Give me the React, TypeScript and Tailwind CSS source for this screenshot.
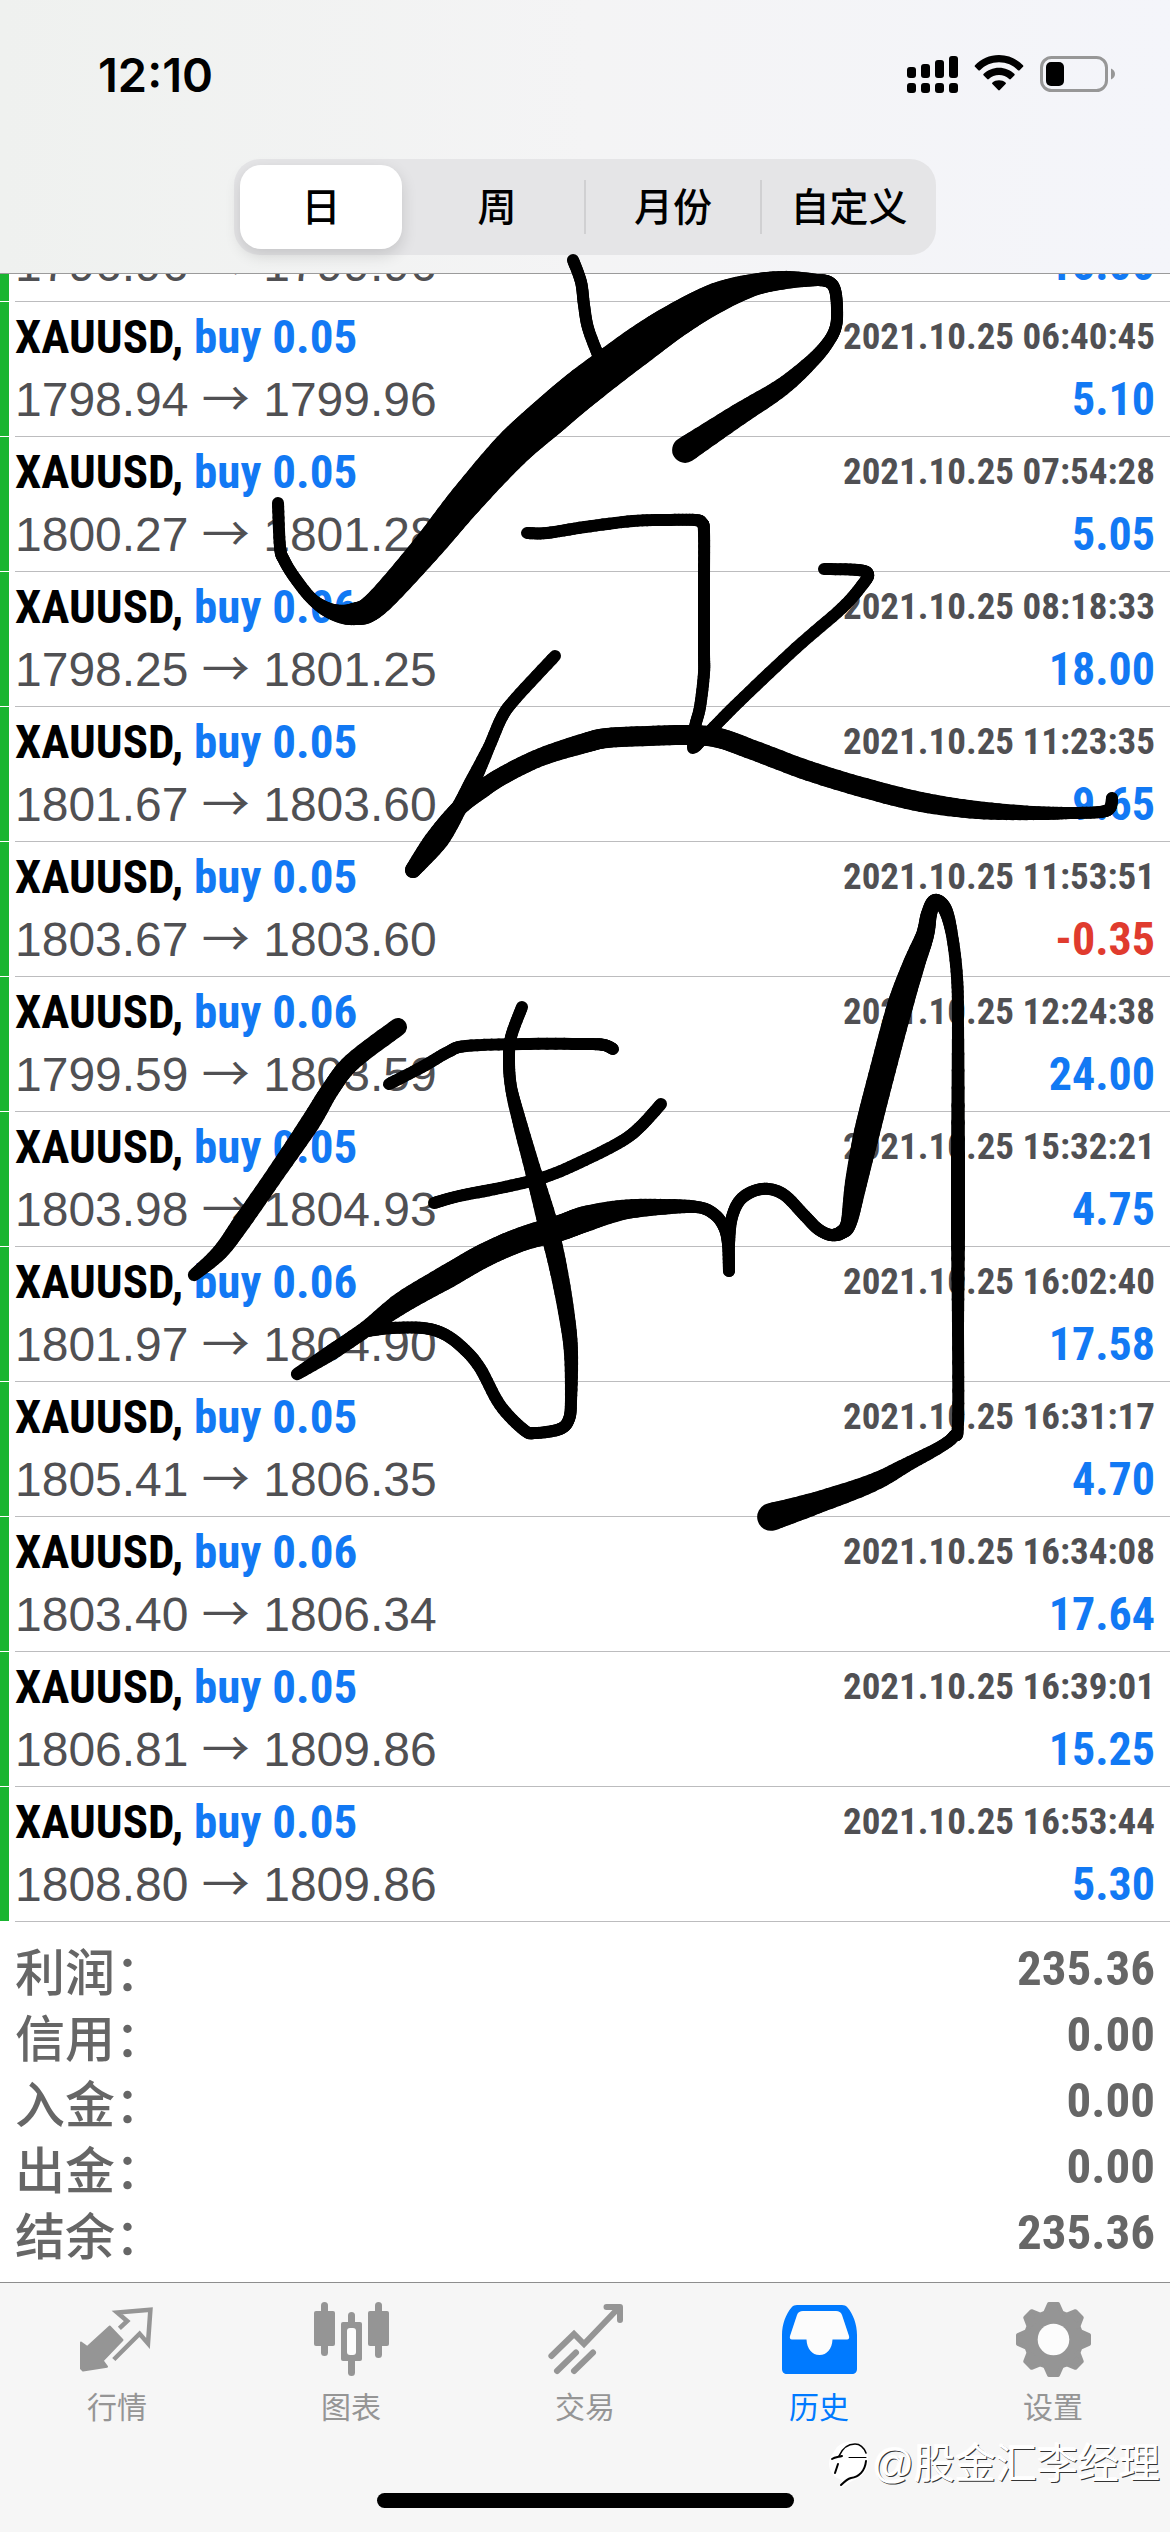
import { Fragment, useState } from "react";
import type { ReactNode } from "react";

type Deal = { lot: string; open: string; close: string; time: string; profit: string };

const deals: Deal[] = [
  { lot: "0.05", open: "1798.94", close: "1799.96", time: "2021.10.25 06:40:45", profit: "5.10" },
  { lot: "0.05", open: "1800.27", close: "1801.28", time: "2021.10.25 07:54:28", profit: "5.05" },
  { lot: "0.06", open: "1798.25", close: "1801.25", time: "2021.10.25 08:18:33", profit: "18.00" },
  { lot: "0.05", open: "1801.67", close: "1803.60", time: "2021.10.25 11:23:35", profit: "9.65" },
  { lot: "0.05", open: "1803.67", close: "1803.60", time: "2021.10.25 11:53:51", profit: "-0.35" },
  { lot: "0.06", open: "1799.59", close: "1803.59", time: "2021.10.25 12:24:38", profit: "24.00" },
  { lot: "0.05", open: "1803.98", close: "1804.93", time: "2021.10.25 15:32:21", profit: "4.75" },
  { lot: "0.06", open: "1801.97", close: "1804.90", time: "2021.10.25 16:02:40", profit: "17.58" },
  { lot: "0.05", open: "1805.41", close: "1806.35", time: "2021.10.25 16:31:17", profit: "4.70" },
  { lot: "0.06", open: "1803.40", close: "1806.34", time: "2021.10.25 16:34:08", profit: "17.64" },
  { lot: "0.05", open: "1806.81", close: "1809.86", time: "2021.10.25 16:39:01", profit: "15.25" },
  { lot: "0.05", open: "1808.80", close: "1809.86", time: "2021.10.25 16:53:44", profit: "5.30" },
];

const totals = [
  { label: "利润：", value: "235.36" },
  { label: "信用：", value: "0.00" },
  { label: "入金：", value: "0.00" },
  { label: "出金：", value: "0.00" },
  { label: "结余：", value: "235.36" },
];

const periods = ["日", "周", "月份", "自定义"];

const condensed = "font-['Liberation_Sans_Narrow','Roboto_Condensed','Noto_Sans_CJK_SC',sans-serif] font-bold";

export default function App() {
  return (
    <div className="relative flex min-h-screen flex-col overflow-hidden bg-white font-['Liberation_Sans','Noto_Sans_CJK_SC',sans-serif]">
      <Header />
      <main className="flex-1">
        <ul>
          {/* the deal above is almost scrolled out, only the foot of its prices shows */}
          <li className="flex h-[28px] overflow-hidden">
            <span className="mb-px w-[9px] bg-[#19b530]" />
            <div className="ml-[6px] flex flex-1 items-end justify-between border-b border-[#bcbcbe] pr-[15px] pb-[5px] whitespace-nowrap">
              <Prices open="1796.96" close="1799.96" />
              <Profit value="15.00" />
            </div>
          </li>
          {deals.map((deal) => (
            <DealRow key={deal.time} deal={deal} />
          ))}
        </ul>
        <Totals />
      </main>
      <TabBar />
      <Ink />
      <Watermark />
    </div>
  );
}

function Header() {
  const [period, setPeriod] = useState("日");

  return (
    <header className="z-10 border-b border-[#9b9b9b] bg-linear-to-r from-[#eff1ef] via-[#f4f4f5] to-[#f4f5fa] pb-[18px]">
      <div className="mb-[11px] flex h-[148px] items-center justify-between pr-[54px] pl-[98px]">
        <span className="font-['Inter',sans-serif] text-[47px] leading-none font-semibold text-black">12:10</span>
        <StatusIcons />
      </div>
      <div className="mx-auto flex w-3/5 items-center rounded-[26px] bg-[#e5e5e7] p-[6px]">
        {periods.map((name, i) => (
          <Fragment key={name}>
            {i > 0 && <span className={`mx-[6px] h-[54px] w-[2px] ${i > 1 ? "bg-[#d0d0d2]" : ""}`} />}
            <button
              type="button"
              onClick={() => setPeriod(name)}
              className={`h-[84px] flex-1 basis-0 rounded-[21px] text-[39px] leading-none font-medium whitespace-nowrap text-black ${
                period === name ? "bg-white shadow-[0_6px_16px_rgba(0,0,0,0.14)]" : ""
              }`}
            >
              {name}
            </button>
          </Fragment>
        ))}
      </div>
    </header>
  );
}

function StatusIcons() {
  return (
    <svg className="h-[38px] w-[209px]" viewBox="0 0 209 38" aria-hidden="true">
      <rect x="0" y="12" width="9" height="11" rx="3" />
      <rect x="14" y="9" width="9" height="14" rx="3" />
      <rect x="28" y="5" width="9" height="18" rx="3" />
      <rect x="42" y="1" width="9" height="22" rx="3" />
      <rect x="0" y="28" width="9" height="10" rx="3" />
      <rect x="14" y="28" width="9" height="10" rx="3" />
      <rect x="28" y="28" width="9" height="10" rx="3" />
      <rect x="42" y="28" width="9" height="10" rx="3" />
      <path d="M92 0C101.500 0 110 4 116 10.200C116.500 10.700 116.500 11.300 116 11.800L112.600 15.200C112.100 15.700 111.500 15.700 111 15.200C106 10.200 99.500 7.300 92 7.300S78 10.200 73 15.200C72.500 15.700 71.900 15.700 71.400 15.200L68 11.800C67.500 11.300 67.500 10.700 68 10.200C74 4 82.500 0 92 0Z" />
      <path d="M92 12.700C98 12.700 103.300 15 107.300 18.800C107.900 19.400 107.900 20 107.300 20.600L103.800 24C103.300 24.500 102.700 24.500 102.200 24C99.400 21.500 96 20 92 20S84.600 21.500 81.800 24C81.300 24.500 80.700 24.500 80.200 24L76.700 20.600C76.100 20 76.100 19.400 76.700 18.800C80.700 15 86 12.700 92 12.700Z" />
      <path d="M92 25.200C94.500 25.200 96.800 26 98.500 27.400C99.100 28 99.100 28.600 98.600 29.100L92.800 35C92.300 35.500 91.700 35.500 91.200 35L85.400 29.100C84.900 28.600 84.900 28 85.500 27.400C87.200 26 89.500 25.200 92 25.200Z" />
      <rect x="134.500" y="2.500" width="65" height="33" rx="10" fill="none" stroke="#979797" strokeWidth="3" />
      <rect x="139" y="7" width="18" height="24" rx="5" />
      <path d="M204 13.500C206.500 14.500 208 16.500 208 19S206.500 23.500 204 24.500Z" fill="#979797" />
    </svg>
  );
}

function DealRow({ deal }: { deal: Deal }) {
  return (
    <li className="flex">
      <span className="mb-px w-[9px] bg-[#19b530]" />
      <div className="ml-[6px] flex-1 border-b border-[#bcbcbe] pt-[3px] pr-[15px] pb-[5px] whitespace-nowrap">
        <div className={`flex h-[63px] items-center justify-between ${condensed}`}>
          <p className="text-[47px] leading-[63px] text-black">
            XAUUSD, <span className="text-[#1279f4]">buy {deal.lot}</span>
          </p>
          <p className="text-[37px] leading-[63px] text-[#505053]">{deal.time}</p>
        </div>
        <div className="flex h-[63px] items-center justify-between">
          <Prices open={deal.open} close={deal.close} />
          <Profit value={deal.profit} />
        </div>
      </div>
    </li>
  );
}

function Prices({ open, close }: { open: string; close: string }) {
  return (
    <p className="h-[63px] text-[48px] leading-[63px] text-[#505053]">
      {open} <span className="font-['Noto_Sans_CJK_SC',sans-serif] leading-none">→</span> {close}
    </p>
  );
}

function Profit({ value }: { value: string }) {
  return (
    <p className={`text-[46px] leading-[63px] ${condensed} ${value.startsWith("-") ? "text-[#e03b2e]" : "text-[#1279f4]"}`}>
      {value}
    </p>
  );
}

function Totals() {
  return (
    <dl className="px-[15px] pt-[14px] pb-4 text-[#666]">
      {totals.map(({ label, value }) => (
        <div key={label} className="flex h-[66px] items-center justify-between">
          <dt className="font-['Noto_Sans_CJK_SC',sans-serif] text-[50px] leading-[62px] font-medium">{label}</dt>
          <dd className={`text-[49px] leading-[66px] ${condensed}`}>{value}</dd>
        </div>
      ))}
    </dl>
  );
}

function TabBar() {
  return (
    <footer className="border-t border-[#8e8e8e] bg-[#f6f6f6] pb-6">
      <nav className="grid grid-cols-5 pt-[18px]">
        <Tab label="行情">
          <path
            d="M1 41.500L7.300 46L29.700 25.500L42.500 39L22.600 59.700L27 65.700L3 69.500L1 67.500Z"
            fill="currentColor"
            stroke="currentColor"
            strokeWidth="2"
            strokeLinejoin="round"
          />
          <path d="M39.400 27.300L47.200 20L37.200 11.500L70.400 8.700L68 42.500L59.600 32.700L33.800 58.500" fill="none" stroke="currentColor" strokeWidth="4.500" />
        </Tab>
        <Tab label="图表">
          <g fill="currentColor">
            <rect x="7" y="1" width="7" height="54" rx="3.500" />
            <rect x="0" y="10" width="21" height="35" rx="2" />
            <rect x="34" y="11" width="7" height="64" rx="3.500" />
            <rect x="27" y="21" width="21" height="39" rx="2" />
            <rect x="61" y="1" width="7" height="56" rx="3.500" />
            <rect x="54" y="10" width="21" height="35" rx="2" />
          </g>
          <rect x="33" y="27" width="9" height="27" rx="3" fill="#fcfcfc" />
        </Tab>
        <Tab label="交易">
          <g fill="none" stroke="currentColor" strokeWidth="6">
            <path d="M3.400 55L26 33L36 43L71 6.500" strokeLinecap="round" />
            <path d="M58.500 6H72V19" strokeLinecap="round" strokeLinejoin="round" />
            <path d="M9 70L28 51.500M26 70L45 51.500" strokeLinecap="round" />
          </g>
        </Tab>
        <Tab label="历史" active>
          <path
            d="M0 34C0 23 4 13 9.500 6.500C11 4.700 13 4 15 4H60C62 4 64 4.700 65.500 6.500C71 13 75 23 75 34V68C75 71 73 73 70 73H5C2 73 0 71 0 68Z"
            fill="currentColor"
          />
          <path
            d="M21 10H54C57 10 58.800 11 60 14L67 35C67.500 37 67 38.500 65 38.500H50.500C50 48 45 54 37.500 54S25 48 24.500 38.500H10C8 38.500 7.500 37 8 35L15 14C16.200 11 18 10 21 10Z"
            fill="#fcfcfc"
          />
        </Tab>
        <Tab label="设置">
          <g fill="currentColor" stroke="currentColor" strokeWidth="4" strokeLinejoin="round">
            <circle cx="37.500" cy="38.500" r="28" />
            {[0, 45, 90, 135, 180, 225, 270, 315].map((deg) => (
              <path key={deg} d="M29 12L33 3H42L46 12Z" transform={`rotate(${deg} 37.500 38.500)`} />
            ))}
          </g>
          <circle cx="37.500" cy="38.500" r="15.800" fill="#fcfcfc" />
        </Tab>
      </nav>
      <div className="mx-auto mt-[69px] h-[15px] w-[417px] rounded-full bg-black" />
    </footer>
  );
}

function Tab({ label, active = false, children }: { label: string; active?: boolean; children: ReactNode }) {
  return (
    <a href="#" className={`flex flex-col items-center ${active ? "text-[#007aff]" : "text-[#959595]"}`}>
      <svg className="h-[76px] w-[75px] overflow-visible" viewBox="0 0 75 76" aria-hidden="true">
        {children}
      </svg>
      <span className="mt-[9px] font-['Noto_Sans_CJK_SC',sans-serif] text-[30px] leading-[38px]">{label}</span>
    </a>
  );
}

// x, y, pen radius
type Dab = [number, number, number];

const strokes: Dab[][] = [
  [[278, 503, 6], [280, 547, 6], [284, 560, 6], [295, 578, 6], [313, 600, 6], [333, 612, 8], [354, 614, 11], [376, 604, 13], [425, 550, 15], [466, 500, 17], [511, 450, 19], [548, 417, 20], [585, 386, 20], [641, 344, 19], [678, 319, 17], [716, 298, 15], [753, 285, 11], [786, 280, 9], [816, 280, 6], [829, 282, 6], [835, 290, 6], [837, 308, 6], [836, 326, 6], [829, 341, 6], [813, 360, 7], [782, 387, 9], [738, 415, 11], [685, 450, 13]],
  [[573, 260, 6], [581, 282, 6], [584, 305, 6], [588, 328, 6], [598, 355, 6]],
  [[527, 533, 6], [547, 533, 6], [585, 527, 6], [633, 521, 6], [667, 520, 6], [695, 520, 6], [702, 523, 6], [704, 532, 6], [704, 580, 6], [704, 650, 6], [704, 673, 6], [700, 707, 6], [695, 727, 6], [693, 748, 6]],
  [[824, 569, 6], [858, 570, 6], [868, 574, 6], [863, 584, 6], [842, 608, 6], [796, 648, 6], [744, 697, 6], [714, 727, 6], [695, 747, 6]],
  [[555, 656, 6], [516, 698, 6], [502, 717, 6], [489, 747, 6], [472, 783, 8], [459, 808, 8], [440, 840, 9], [413, 870, 8]],
  [[413, 870, 8], [433, 840, 9], [457, 810, 8], [481, 790, 9], [504, 775, 9], [541, 757, 9], [585, 743, 10], [607, 738, 10], [648, 736, 10], [690, 735, 10], [719, 738, 10], [753, 750, 10], [809, 771, 10], [865, 788, 10], [921, 802, 10], [977, 810, 9], [1033, 813, 7], [1070, 813, 6], [1100, 812, 6], [1110, 808, 6], [1112, 798, 6]],
  [[398, 1027, 9], [352, 1062, 9], [330, 1090, 9], [310, 1123, 10], [276, 1173, 9], [242, 1222, 9], [220, 1252, 8], [194, 1275, 6]],
  [[389, 1084, 6], [422, 1067, 6], [448, 1052, 6], [466, 1046, 6], [522, 1044, 6], [585, 1044, 6], [604, 1045, 6], [613, 1049, 6]],
  [[522, 1007, 6], [511, 1037, 6], [509, 1060, 6], [511, 1087, 6], [519, 1120, 7], [532, 1167, 8], [546, 1217, 10], [558, 1267, 9], [567, 1317, 8], [571, 1353, 7], [571, 1400, 6], [569, 1419, 6], [560, 1429, 6], [536, 1433, 6], [524, 1430, 6], [500, 1405, 6], [480, 1368, 6], [463, 1348, 6], [444, 1334, 6], [423, 1328, 6], [392, 1328, 6], [367, 1331, 6]],
  [[434, 1203, 6], [459, 1196, 6], [500, 1188, 6], [545, 1177, 6], [585, 1160, 6], [622, 1141, 6], [641, 1126, 6], [661, 1104, 6]],
  [[297, 1374, 6], [332, 1352, 8], [366, 1329, 8], [403, 1302, 11], [448, 1276, 12], [485, 1255, 12], [522, 1239, 12], [560, 1228, 13], [585, 1219, 13], [622, 1210, 10], [660, 1207, 8], [697, 1207, 6], [714, 1214, 6], [724, 1227, 6], [728, 1244, 6], [729, 1271, 6]],
  [[729, 1271, 6], [729, 1244, 6], [732, 1217, 6], [742, 1198, 6], [762, 1189, 6], [783, 1194, 6], [805, 1216, 6], [818, 1229, 6], [831, 1235, 6], [842, 1232, 7], [849, 1222, 8], [856, 1183, 11], [867, 1132, 13], [883, 1069, 13], [900, 1006, 13], [914, 964, 11], [925, 935, 9], [929, 914, 8], [935, 901, 7], [945, 909, 7], [952, 935, 6], [957, 977, 6], [958, 1027, 6], [958, 1153, 7], [958, 1238, 7], [958, 1322, 6], [958, 1423, 6], [954, 1436, 6], [940, 1447, 6], [910, 1463, 7], [872, 1483, 9], [816, 1503, 11], [771, 1517, 14]],
];

function spline(a: number, b: number, c: number, d: number, t: number) {
  return 0.5 * (2 * b + (c - a) * t + (2 * a - 5 * b + 4 * c - d) * t * t + (3 * b - a - 3 * c + d) * t * t * t);
}

function smooth(points: Dab[], steps = 8): Dab[] {
  const out: Dab[] = [];
  for (let i = 0; i < points.length - 1; i++) {
    const p0 = points[Math.max(i - 1, 0)];
    const p1 = points[i];
    const p2 = points[i + 1];
    const p3 = points[Math.min(i + 2, points.length - 1)];
    for (let s = 0; s < steps; s++) {
      const t = s / steps;
      out.push([
        spline(p0[0], p1[0], p2[0], p3[0], t),
        spline(p0[1], p1[1], p2[1], p3[1], t),
        p1[2] + (p2[2] - p1[2]) * t,
      ]);
    }
  }
  out.push(points[points.length - 1]);
  return out;
}

// Freehand pen marks drawn over the list
function Ink() {
  return (
    <svg className="pointer-events-none absolute top-0 left-0 z-20 w-full" viewBox="0 0 1170 2532" aria-hidden="true">
      <g stroke="#000" strokeLinecap="round">
        {strokes.map((points, n) => {
          const dabs = smooth(points);
          return dabs.slice(1).map(([x, y, r], i) => (
            <line key={`${n}-${i}`} x1={dabs[i][0]} y1={dabs[i][1]} x2={x} y2={y} strokeWidth={r + dabs[i][2]} />
          ));
        })}
      </g>
    </svg>
  );
}

function Watermark() {
  return (
    <div className="absolute right-[10px] bottom-[43px] z-20 flex items-center gap-[2px] text-white">
      <svg className="h-[50px] w-[42px]" viewBox="0 0 42 50" aria-hidden="true">
        <path d="M9 8C19 -1 35 2 39 14C43 27 37 38 24 42L13 49L14 41C3 38 -1 28 2 19Z" fill="#fff" />
        <g fill="none" stroke="#000" strokeLinecap="round">
          <path d="M11 17C15 8 20 5 27 5C32 5 36 9 38 14" strokeWidth="1.600" />
          <path d="M4 20C7 18 11 18 14 17M10 25L7 34" strokeWidth="2" />
          <path d="M21 18.500H38" strokeWidth="1" />
          <path d="M38 22C37 32 31 38 23 39C19 40 16 43 13 46" strokeWidth="2" />
        </g>
      </svg>
      <span className="font-['Liberation_Sans','Noto_Sans_CJK_SC',sans-serif] text-[41px] leading-[50px] [text-shadow:1px_1px_0_#333,-1px_-1px_1px_#fff]">
        @股金汇李经理
      </span>
    </div>
  );
}
